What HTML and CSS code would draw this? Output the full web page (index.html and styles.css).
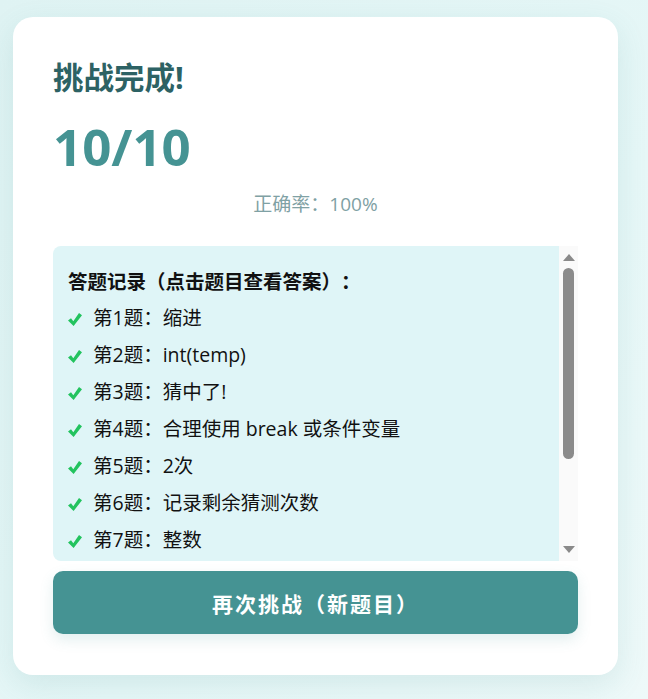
FILE: index.html
```html
<!DOCTYPE html>
<html lang="zh-CN">
<head>
<meta charset="utf-8">
<title>挑战完成</title>
<link rel="stylesheet" href="styles.css">
</head>
<body>
<div class="card">
  <h2 class="title">挑战完成!</h2>
  <div class="score">10/10</div>
  <p class="rate">正确率：100%</p>
  <div class="records">
    <div class="rec-list">
      <div class="rec-head">答题记录（点击题目查看答案）：</div>
      <div class="rec"><svg class="ok" viewBox="0 0 14 13"><path d="M0 7.6 L3 5.3 L5.3 8.3 L11 0 L14 2.2 L5.6 13 Z"/></svg>第1题：缩进</div>
      <div class="rec"><svg class="ok" viewBox="0 0 14 13"><path d="M0 7.6 L3 5.3 L5.3 8.3 L11 0 L14 2.2 L5.6 13 Z"/></svg>第2题：int(temp)</div>
      <div class="rec"><svg class="ok" viewBox="0 0 14 13"><path d="M0 7.6 L3 5.3 L5.3 8.3 L11 0 L14 2.2 L5.6 13 Z"/></svg>第3题：猜中了!</div>
      <div class="rec"><svg class="ok" viewBox="0 0 14 13"><path d="M0 7.6 L3 5.3 L5.3 8.3 L11 0 L14 2.2 L5.6 13 Z"/></svg>第4题：合理使用 break 或条件变量</div>
      <div class="rec"><svg class="ok" viewBox="0 0 14 13"><path d="M0 7.6 L3 5.3 L5.3 8.3 L11 0 L14 2.2 L5.6 13 Z"/></svg>第5题：2次</div>
      <div class="rec"><svg class="ok" viewBox="0 0 14 13"><path d="M0 7.6 L3 5.3 L5.3 8.3 L11 0 L14 2.2 L5.6 13 Z"/></svg>第6题：记录剩余猜测次数</div>
      <div class="rec"><svg class="ok" viewBox="0 0 14 13"><path d="M0 7.6 L3 5.3 L5.3 8.3 L11 0 L14 2.2 L5.6 13 Z"/></svg>第7题：整数</div>
    </div>
    <div class="scrollbar" aria-hidden="true">
      <div class="arrow-up"></div>
      <div class="track"><div class="thumb"></div></div>
      <div class="arrow-down"></div>
    </div>
  </div>
  <button class="retry">再次挑战（新题目）</button>
</div>
</body>
</html>
```
FILE: styles.css
```css
html, body {
  margin: 0;
  height: 100%;
}
body {
  background: linear-gradient(135deg, #dff3f3 0%, #e6f7f7 60%, #eef9f9 100%);
  padding: 17px 0 0 13px;
  box-sizing: border-box;
  font-family: "Open Sans", "Noto Sans CJK SC", sans-serif;
  color: #222;
  text-spacing-trim: space-all;
}
.card {
  width: 605px;
  box-sizing: border-box;
  background: #ffffff;
  border-radius: 20px;
  padding: 40px 40px 41px 40px;
  box-shadow: 0 10px 30px rgba(69, 147, 147, 0.14);
  display: flex;
  flex-direction: column;
}
.title {
  margin: 0;
  font-size: 30.5px;
  line-height: 40px;
  font-weight: 700;
  color: #2d6264;
}
.score {
  margin-top: 17px;
  font-size: 51px;
  line-height: 64px;
  font-weight: 700;
  color: #459393;
}
.rate {
  margin: 13px 0 0 0;
  text-align: center;
  font-size: 19px;
  line-height: 26px;
  color: #7fa1a4;
}
.records {
  margin-top: 29px;
  height: 315px;
  display: flex;
  background: #dff5f7;
  border-radius: 8px 0 0 8px;
  overflow: hidden;
}
.rec-list {
  flex: 1;
  overflow: hidden;
  padding: 20px 15px 0 15px;
}
.rec-head {
  font-size: 19.5px;
  font-weight: 700;
  line-height: 32px;
  margin-bottom: 4px;
  color: #111;
}
.rec {
  font-size: 19.5px;
  line-height: 32px;
  margin-bottom: 5px;
  color: #111;
  display: flex;
  align-items: center;
}
.ok {
  width: 14px;
  height: 13px;
  fill: #22c35e;
  margin: 2px 11px 0 0;
  flex: none;
}
.scrollbar {
  width: 19px;
  flex: none;
  background: #fafafa;
  display: flex;
  flex-direction: column;
  align-items: center;
}
.arrow-up, .arrow-down {
  width: 0;
  height: 0;
  border-left: 6px solid transparent;
  border-right: 6px solid transparent;
  flex: none;
}
.arrow-up {
  margin-top: 8px;
  border-bottom: 7px solid #8a8a8a;
}
.arrow-down {
  margin-bottom: 8px;
  border-top: 7px solid #8a8a8a;
}
.track {
  flex: 1;
  width: 100%;
  display: flex;
  justify-content: center;
  padding-top: 7px;
  box-sizing: border-box;
}
.thumb {
  width: 11px;
  height: 191px;
  border-radius: 6px;
  background: #8b8b8b;
}
.retry {
  margin-top: 10px;
  height: 63px;
  border: none;
  border-radius: 10px;
  background: #459393;
  color: #ffffff;
  font-family: "Noto Sans CJK SC", sans-serif;
  font-size: 21px;
  font-weight: 700;
  letter-spacing: 2px;
  text-spacing-trim: space-all;
  box-shadow: 0 6px 14px rgba(69, 147, 147, 0.15);
}
```
